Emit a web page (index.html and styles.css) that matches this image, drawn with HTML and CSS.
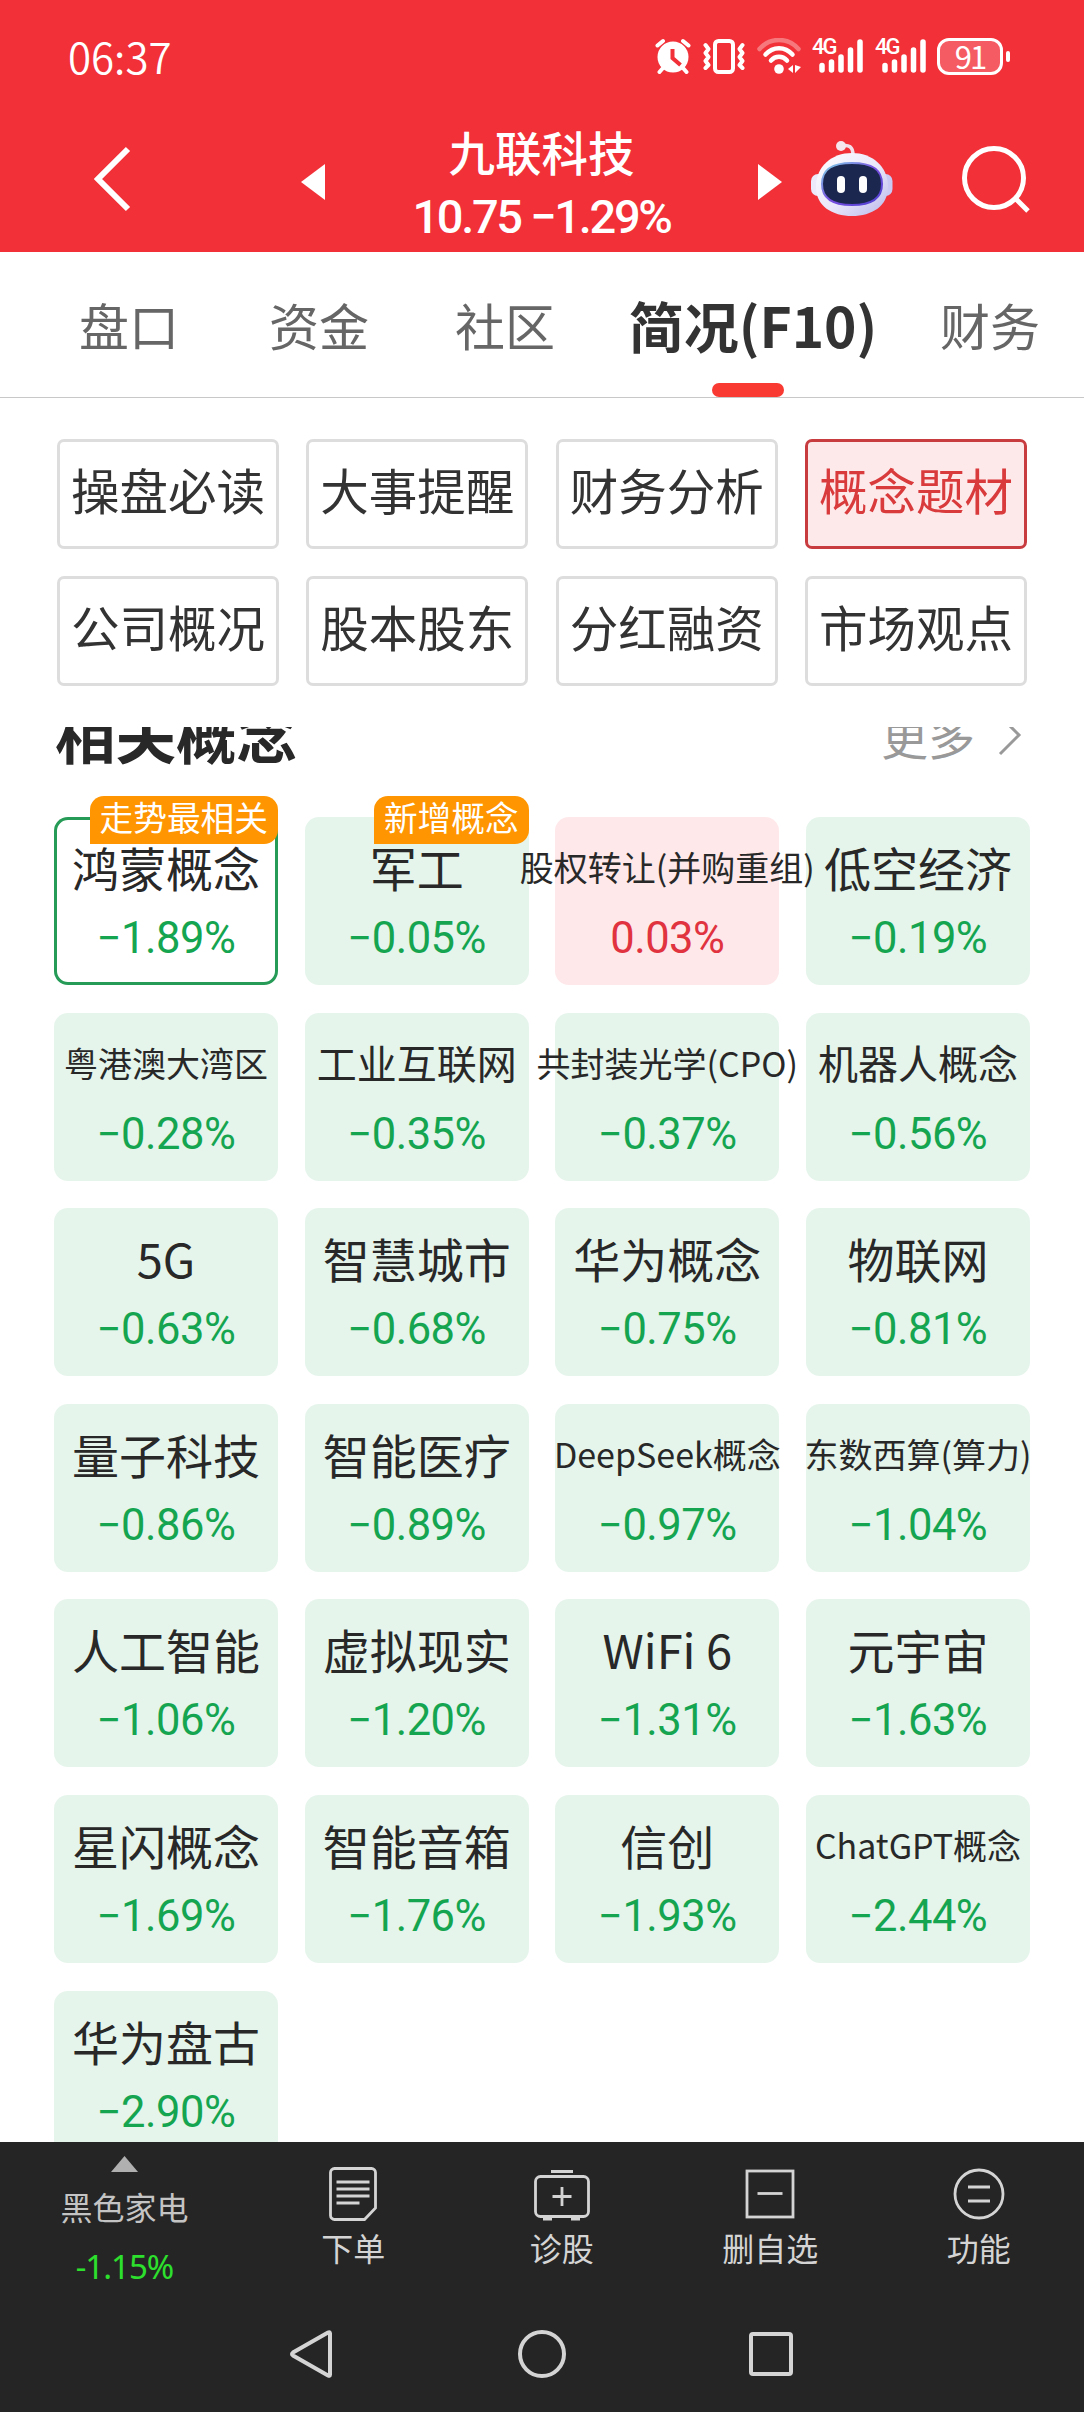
FILE: index.html
```html
<!DOCTYPE html>
<html lang="zh-CN">
<head>
    <meta charset="UTF-8">
    <meta name="viewport" content="width=device-width, initial-scale=1.0">
    <title>九联科技 - 概念题材</title>
    <link rel="stylesheet" href="styles.css">
</head>
<body>
    <div class="app">
        <header class="top">
            <div class="status">
                <span class="time">06:37</span>
                <div class="status-icons">
                    <svg class="alarm" width="36" height="36" viewBox="0 0 36 36">
                        <g stroke="#fff" stroke-width="4" stroke-linecap="round">
                            <path d="M2.5 7.5 8 3M33.500 7.500 28 3M8 30l-3.500 4M28 30l3.500 4"/>
                        </g>
                        <circle cx="18" cy="19" r="15.500" fill="#fff"/>
                        <path d="M17.500 11v9l8 7" fill="none" stroke="#f13038" stroke-width="4"/>
                    </svg>
                    <svg class="vibrate" width="42" height="36" viewBox="0 0 42 36" fill="none" stroke="#fff">
                        <rect x="12" y="3" width="18" height="31" rx="3.500" stroke-width="4"/>
                        <path d="M2.500 7 5.500 11 2.500 15 5.500 19 2.500 23 5.500 27 2.500 30M39.500 7l-3 4 3 4-3 4 3 4-3 4 3 3" stroke-width="4" stroke-linejoin="round" stroke-linecap="round"/>
                    </svg>
                    <svg class="wifi" width="44" height="36" viewBox="0 0 44 36" fill="none" stroke="#fff" stroke-width="4.500" stroke-linecap="round">
                        <path d="M2.500 11C13-1 31-1 41.500 11" opacity=".35"/>
                        <path d="M8.500 16.500C16 8 28 8 35.500 16.500M14 22.500c4.500-5 11.500-5 16 0"/>
                        <circle cx="22" cy="31" r="4.800" fill="#fff" stroke="none"/>
                        <path d="M36 27v8l-5-4zM38 27v8l6-6z" fill="#fff" stroke="none"/>
                    </svg>
                    <div class="signal">
                        <span class="net">4G</span>
                        <svg width="51" height="36" viewBox="0 0 51 36" stroke="#fff" stroke-width="5.500" stroke-linecap="round">
                            <path d="M10 27.500v4.500M19.500 24v8M29 19v13M38.500 12v20M48 4v28"/>
                        </svg>
                    </div>
                    <div class="signal">
                        <span class="net">4G</span>
                        <svg width="51" height="36" viewBox="0 0 51 36" stroke="#fff" stroke-width="5.500" stroke-linecap="round">
                            <path d="M10 27.500v4.500M19.500 24v8M29 19v13M38.500 12v20M48 4v28"/>
                        </svg>
                    </div>
                    <div class="battery"><span>91</span></div>
                    <i class="battery-tip"></i>
                </div>
            </div>
            <div class="title-bar">
                <svg class="back" width="38" height="66" viewBox="0 0 38 66" fill="none" stroke="#fff" stroke-width="6">
                    <path d="M34 3 4 33l30 30"/>
                </svg>
                <svg class="prev" width="24" height="36" viewBox="0 0 24 36"><path d="M24 0v36L0 18z" fill="#fff"/></svg>
                <div class="stock">
                    <div class="stock-name">九联科技</div>
                    <div class="stock-price">10.75 −1.29%</div>
                </div>
                <svg class="next" width="24" height="36" viewBox="0 0 24 36"><path d="M0 0v36l24-18z" fill="#fff"/></svg>
                <svg class="robot" width="82" height="76" viewBox="0 0 82 76">
                    <defs>
                        <linearGradient id="shell" x1="0" y1="0" x2="1" y2="1">
                            <stop offset="0" stop-color="#ffffff"/>
                            <stop offset=".55" stop-color="#e9e6fa"/>
                            <stop offset="1" stop-color="#b9b8ea"/>
                        </linearGradient>
                        <linearGradient id="rim" x1="0" y1="0" x2="1" y2="1">
                            <stop offset="0" stop-color="#7fd6e6"/>
                            <stop offset=".5" stop-color="#7a4fe0"/>
                            <stop offset="1" stop-color="#4b3fd0"/>
                        </linearGradient>
                    </defs>
                    <path d="M30 5c8-2 12 1 12 9" fill="none" stroke="#f3dfea" stroke-width="3.500"/>
                    <circle cx="30" cy="5" r="5" fill="#f6e6ee"/>
                    <rect x="0" y="33" width="16" height="22" rx="7" fill="#eceafa"/>
                    <rect x="66" y="33" width="15.500" height="22" rx="7" fill="#c9c9f4"/>
                    <path d="M41 12c20 0 36 13 36 34 0 19-16 29-36 29S5 65 5 46c0-21 16-34 36-34z" fill="url(#shell)"/>
                    <path d="M41 22c18 0 30 5 30 21 0 15-12 21-30 21S11 58 11 43c0-16 12-21 30-21z" fill="#1c2750" stroke="url(#rim)" stroke-width="2"/>
                    <rect x="26" y="35" width="8" height="17" rx="4" fill="#fff"/>
                    <rect x="48" y="35" width="8" height="17" rx="4" fill="#fff"/>
                </svg>
                <svg class="search" width="68" height="68" viewBox="0 0 68 68" fill="none" stroke="#fff" stroke-width="5">
                    <circle cx="32" cy="33" r="29.500"/>
                    <path d="M53 53l13 13"/>
                </svg>
            </div>
        </header>

        <nav class="tabs">
            <span>盘口</span>
            <span>资金</span>
            <span>社区</span>
            <span class="active">简况(F10)</span>
            <span>财务</span>
        </nav>

        <div class="chips">
            <div class="chip">操盘必读</div>
            <div class="chip">大事提醒</div>
            <div class="chip">财务分析</div>
            <div class="chip active">概念题材</div>
            <div class="chip">公司概况</div>
            <div class="chip">股本股东</div>
            <div class="chip">分红融资</div>
            <div class="chip">市场观点</div>
        </div>

        <!-- 滚动区域 -->
        <main class="scroll">
            <div class="section-head">
                <h2>相关概念</h2>
                <span class="more">更多
                    <svg width="24" height="42" viewBox="0 0 24 42" fill="none" stroke="#999" stroke-width="3"><path d="M2 2l19 19L2 40"/></svg>
                </span>
            </div>
            <div class="cards">
                <div class="card best"><b class="badge">走势最相关</b><div class="name">鸿蒙概念</div><div class="rate">−1.89%</div></div>
                <div class="card"><b class="badge">新增概念</b><div class="name">军工</div><div class="rate">−0.05%</div></div>
                <div class="card up"><div class="name small">股权转让(并购重组)</div><div class="rate">0.03%</div></div>
                <div class="card"><div class="name">低空经济</div><div class="rate">−0.19%</div></div>

                <div class="card"><div class="name small">粤港澳大湾区</div><div class="rate">−0.28%</div></div>
                <div class="card"><div class="name medium">工业互联网</div><div class="rate">−0.35%</div></div>
                <div class="card"><div class="name small">共封装光学(CPO)</div><div class="rate">−0.37%</div></div>
                <div class="card"><div class="name medium">机器人概念</div><div class="rate">−0.56%</div></div>

                <div class="card"><div class="name">5G</div><div class="rate">−0.63%</div></div>
                <div class="card"><div class="name">智慧城市</div><div class="rate">−0.68%</div></div>
                <div class="card"><div class="name">华为概念</div><div class="rate">−0.75%</div></div>
                <div class="card"><div class="name">物联网</div><div class="rate">−0.81%</div></div>

                <div class="card"><div class="name">量子科技</div><div class="rate">−0.86%</div></div>
                <div class="card"><div class="name">智能医疗</div><div class="rate">−0.89%</div></div>
                <div class="card"><div class="name small">DeepSeek概念</div><div class="rate">−0.97%</div></div>
                <div class="card"><div class="name small">东数西算(算力)</div><div class="rate">−1.04%</div></div>

                <div class="card"><div class="name">人工智能</div><div class="rate">−1.06%</div></div>
                <div class="card"><div class="name">虚拟现实</div><div class="rate">−1.20%</div></div>
                <div class="card"><div class="name">WiFi 6</div><div class="rate">−1.31%</div></div>
                <div class="card"><div class="name">元宇宙</div><div class="rate">−1.63%</div></div>

                <div class="card"><div class="name">星闪概念</div><div class="rate">−1.69%</div></div>
                <div class="card"><div class="name">智能音箱</div><div class="rate">−1.76%</div></div>
                <div class="card"><div class="name">信创</div><div class="rate">−1.93%</div></div>
                <div class="card"><div class="name small">ChatGPT概念</div><div class="rate">−2.44%</div></div>

                <div class="card"><div class="name">华为盘古</div><div class="rate">−2.90%</div></div>
            </div>
        </main>

        <footer class="bottom">
            <div class="toolbar">
                <div class="tool industry">
                    <svg width="27" height="16" viewBox="0 0 27 16"><path d="M13.500 0 27 16H0z" fill="#b0b0b0"/></svg>
                    <span class="industry-name">黑色家电</span>
                    <span class="industry-rate">-1.15%</span>
                </div>
                <div class="tool">
                    <svg width="56" height="54" viewBox="0 0 56 54" fill="none" stroke="#d4d4d4" stroke-width="2.800">
                        <path d="M9.500 1.500h37a4 4 0 0 1 4 4V41L39.500 52.500h-30a4 4 0 0 1-4-4v-43a4 4 0 0 1 4-4z"/>
                        <path d="M11.500 15H44.500M11.500 22H44.500M11.500 29H44.500M11.500 36H34.500"/>
                    </svg>
                    <span>下单</span>
                </div>
                <div class="tool">
                    <svg width="56" height="54" viewBox="0 0 56 54" fill="none" stroke="#d4d4d4" stroke-width="2.800">
                        <rect x="1.500" y="9.500" width="53" height="40" rx="5"/>
                        <path d="M17 4.500h22M28 20v19M18.500 29.500h19"/>
                        <path d="M9 51.500h9M37 51.500h9" stroke-width="4"/>
                    </svg>
                    <span>诊股</span>
                </div>
                <div class="tool">
                    <svg width="56" height="54" viewBox="0 0 56 54" fill="none" stroke="#d4d4d4" stroke-width="2.800">
                        <rect x="5" y="4" width="46" height="46"/>
                        <path d="M15.500 26.500h25"/>
                    </svg>
                    <span>删自选</span>
                </div>
                <div class="tool">
                    <svg width="56" height="54" viewBox="0 0 56 54" fill="none" stroke="#d4d4d4" stroke-width="2.800">
                        <circle cx="28" cy="27" r="24"/>
                        <path d="M17 20h22M17 34h22"/>
                    </svg>
                    <span>功能</span>
                </div>
            </div>
            <div class="sys-nav">
                <svg width="50" height="50" viewBox="0 0 50 50"><path d="M42 4.500v41q0 2-2 1L5 26.500q-2-1.500 0-3L40 3.500q2-1 2 1z"/></svg>
                <svg width="50" height="50" viewBox="0 0 50 50"><circle cx="25" cy="25" r="22"/></svg>
                <svg width="50" height="50" viewBox="0 0 50 50"><rect x="5" y="5" width="40" height="40" rx="2"/></svg>
            </div>
        </footer>
    </div>
</body>
</html>
```
FILE: styles.css
```css
* {
    box-sizing: border-box;
}
body {
    margin: 0;
    background-color: #fff;
    color: #333;
    font-family: "Noto Sans CJK SC", sans-serif;
}
svg {
    display: block;
    flex: none;
}
.app {
    width: 1084px;
    height: 2412px;
    display: flex;
    flex-direction: column;
    overflow: hidden;
}

/* 顶部 */
.top {
    height: 252px;
    flex: none;
    background-color: #f13038;
    color: #fff;
}
.status {
    display: flex;
    justify-content: space-between;
    align-items: center;
    height: 112px;
    padding: 0 74px 0 68px;
}
.time {
    font-size: 42px;
    font-weight: 350;
    line-height: 60px;
}
.status-icons {
    display: flex;
    align-items: center;
}
.vibrate,
.wifi,
.signal {
    margin-left: 12px;
}
.wifi + .signal {
    margin-left: 11px;
}
.signal {
    position: relative;
}
.net {
    position: absolute;
    left: 0;
    top: 0;
    font-family: Roboto, sans-serif;
    font-size: 22px;
    font-weight: 500;
    line-height: 18px;
    letter-spacing: -2px;
}
.battery {
    width: 66px;
    height: 37px;
    margin-left: 11px;
    border: 3px solid #fff;
    border-radius: 12px;
    background-color: #f55b62;
    text-align: center;
    font-size: 31px;
    line-height: 29px;
    letter-spacing: -2px;
}
.battery-tip {
    width: 4px;
    height: 11px;
    margin-left: 3px;
    border-radius: 2px;
    background-color: #fff;
}
.title-bar {
    display: flex;
    align-items: center;
    height: 140px;
    padding: 0 54px 6px 94px;
}
.prev {
    margin: 6px 0 0 169px;
}
.stock {
    width: 433px;
    padding-top: 9px;
    text-align: center;
}
.stock-name {
    font-size: 46.5px;
    font-weight: 500;
    line-height: 62px;
}
.stock-price {
    margin-top: 4px;
    font-family: Roboto, sans-serif;
    font-size: 47px;
    font-weight: 500;
    line-height: 62px;
    letter-spacing: -2.300px;
}
.next {
    margin-top: 6px;
}
.robot {
    margin-left: 29px;
}
.search {
    margin-left: 69px;
}

/* 标签栏 */
.tabs {
    display: grid;
    grid-template-columns: 190px 190px 182px 314px 160px;
    flex: none;
    height: 146px;
    padding-left: 34px;
    border-bottom: 1px solid #c8c8c8;
    color: #666;
    font-size: 50px;
    line-height: 144px;
    text-align: center;
}
.tabs .active {
    position: relative;
    color: #333;
    font-size: 55px;
    font-weight: bold;
}
.tabs .active::after {
    content: "";
    position: absolute;
    left: 50%;
    bottom: 0;
    width: 72px;
    height: 14px;
    margin-left: -41px;
    border-radius: 7px;
    background-color: #f93a32;
}

/* 二级菜单 */
.chips {
    display: grid;
    grid-template-columns: repeat(4, 222px);
    justify-content: space-between;
    row-gap: 27px;
    flex: none;
    padding: 41px 57px;
}
.chip {
    height: 110px;
    border: 3px solid #ddd;
    border-radius: 7px;
    font-size: 48.5px;
    line-height: 94px;
    text-align: center;
    white-space: nowrap;
}
.chip.active {
    border-color: #c83c40;
    background-color: #fde9ea;
    color: #d93a3c;
}

.scroll {
    flex: 1;
    min-height: 0;
    overflow: hidden;
    padding: 0 54px;
}
.section-head {
    display: flex;
    justify-content: space-between;
    align-items: center;
    height: 90px;
    margin-top: -39px;
    padding: 0 8px 0 1px;
}
.section-head h2 {
    margin: 0;
    color: #282828;
    font-size: 60.5px;
    line-height: 90px;
}
.more {
    display: flex;
    align-items: center;
    gap: 23px;
    padding-top: 4px;
    color: #999;
    font-size: 47px;
    line-height: 90px;
}
.cards {
    display: grid;
    grid-template-columns: repeat(4, 224px);
    grid-auto-rows: 168px;
    justify-content: space-between;
    row-gap: 27.6px;
    margin-top: 39px;
}
.card {
    position: relative;
    display: flex;
    flex-direction: column;
    align-items: center;
    padding-top: 14px;
    border-radius: 14px;
    background-color: #e5f5ec;
    color: #15a551;
}
.card.best {
    background-color: #fff;
    box-shadow: inset 0 0 0 3px #259b57;
}
.card.up {
    background-color: #fee8ea;
    color: #e0333f;
}
.name {
    position: relative;
    z-index: 1;
    color: #282828;
    font-size: 47px;
    line-height: 71px;
    white-space: nowrap;
}
.name.medium {
    font-size: 40px;
}
.name.small {
    font-size: 34px;
}
.rate {
    font-family: Roboto, sans-serif;
    font-size: 43.5px;
    line-height: 74px;
    letter-spacing: -0.5px;
}
.badge {
    position: absolute;
    z-index: 2;
    right: 0;
    top: -21px;
    height: 48px;
    padding: 0 10px;
    border-radius: 14px 14px 14px 0;
    background-color: #ff9500;
    color: #fff;
    font-size: 33.7px;
    font-weight: normal;
    line-height: 41px;
}

/* 底部 */
.bottom {
    flex: none;
    height: 270px;
    background-color: #252525;
    color: #d4d4d4;
}
.toolbar {
    display: grid;
    grid-template-columns: 249px repeat(4, 208.5px);
    height: 163px;
}
.tool {
    display: flex;
    flex-direction: column;
    align-items: center;
    padding-top: 25px;
    font-size: 32px;
    line-height: 52px;
}
.industry {
    padding-top: 14px;
}
.industry-name {
    margin-top: 8px;
    color: #c4c4c4;
}
.industry-rate {
    margin-top: 11px;
    color: #2ee02e;
    font-family: "Noto Sans", sans-serif;
    font-size: 33px;
    line-height: 48px;
    letter-spacing: -1px;
}
.sys-nav {
    display: flex;
    justify-content: center;
    gap: 179px;
    padding-top: 24px;
    fill: none;
    stroke: #d4d4d4;
    stroke-width: 4px;
}
```
